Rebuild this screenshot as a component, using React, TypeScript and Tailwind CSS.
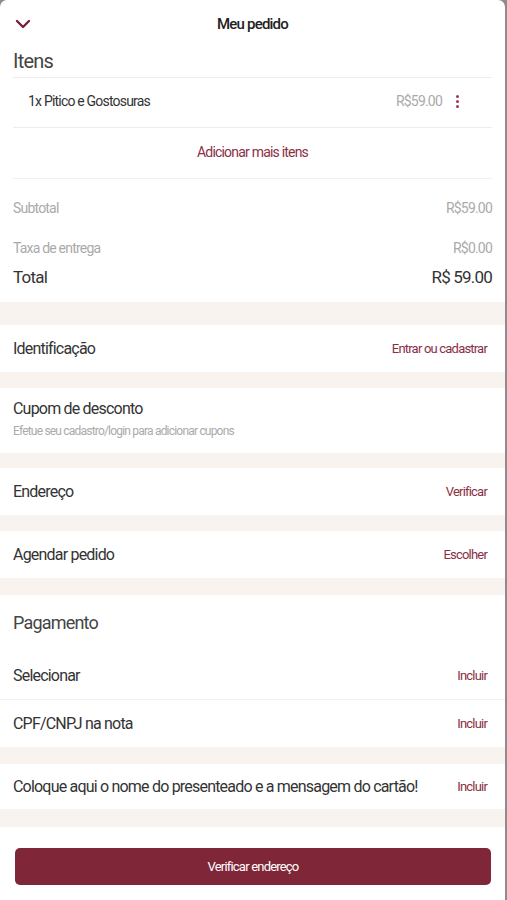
import React from "react";

const maroon = "text-[#8a2f45]";

function Band({ h }: { h: string }) {
  return <div className={`${h} bg-[#f8f3ee]`} />;
}

function Row({ label, action, h = "h-[47px]" }: { label: string; action: string; h?: string }) {
  return (
    <div className={`flex items-center justify-between px-[13px] ${h}`}>
      <span className="text-[16px] text-[#333]">{label}</span>
      <span className={`text-[13px] ${maroon} pr-[5px]`}>{action}</span>
    </div>
  );
}

export default function App() {
  return (
    <div
      className="w-[507px] h-[900px] bg-[#8c8c8c] overflow-hidden"
      style={{ fontFamily: "Roboto, 'Noto Sans', sans-serif" }}
    >
      <div className="w-[505px] h-[900px] bg-white rounded-t-[7px] flex flex-col tracking-[-0.05em]">
        {/* Header */}
        <div className="relative h-[46px] flex items-center justify-center">
          <svg className="absolute left-[15px] top-[19px]" width="16" height="10" viewBox="0 0 16 10">
            <path d="M2 2 L8 8 L14 2" fill="none" stroke="#7a1f38" strokeWidth="2.4" strokeLinecap="round" strokeLinejoin="round" />
          </svg>
          <span className="text-[15px] font-medium text-[#222] mt-[2px]">Meu pedido</span>
        </div>
        <div className="px-[13px] h-[31px] flex items-center pb-[2px]">
          <span className="text-[20px] text-[#444]">Itens</span>
        </div>
        <div className="mx-[13px] border-t border-[#ededed]" />
        <div className="mx-[13px] h-[49px] flex items-center justify-between pl-[15px] pr-[33px] pb-[2px]">
          <span className="text-[14px] text-[#333]">1x Pitico e Gostosuras</span>
          <div className="flex items-center gap-[14px]">
            <span className="text-[14px] text-[#aaa]">R$59.00</span>
            <div className="flex flex-col gap-[2px] w-[3px]">
              <div className="w-[3px] h-[3px] rounded-full bg-[#a83055]" />
              <div className="w-[3px] h-[3px] rounded-full bg-[#a83055]" />
              <div className="w-[3px] h-[3px] rounded-full bg-[#a83055]" />
            </div>
          </div>
        </div>
        <div className="mx-[13px] border-t border-[#ededed]" />
        <div className="h-[50px] flex items-center justify-center pb-[2px]">
          <span className={`text-[14px] ${maroon}`}>Adicionar mais itens</span>
        </div>
        <div className="mx-[13px] border-t border-[#f0f0f0]" />
        <div className="px-[13px] pt-[19px] flex justify-between text-[14px] text-[#aaa]">
          <span>Subtotal</span>
          <span>R$59.00</span>
        </div>
        <div className="px-[13px] pt-[19px] flex justify-between text-[14px] text-[#aaa]">
          <span>Taxa de entrega</span>
          <span>R$0.00</span>
        </div>
        <div className="px-[13px] pt-[6px] h-[35px] flex justify-between text-[17px] text-[#333]">
          <span>Total</span>
          <span>R$ 59.00</span>
        </div>
        <Band h="h-[23px] mt-[8px]" />
        <Row label="Identificação" action="Entrar ou cadastrar" />
        <Band h="h-[16px]" />
        <div className="px-[13px] h-[65px] flex flex-col justify-center pb-[4px]">
          <span className="text-[16px] text-[#333] leading-[22px]">Cupom de desconto</span>
          <span className="text-[12px] text-[#aaa] leading-[18px] mt-[2px]">Efetue seu cadastro/login para adicionar cupons</span>
        </div>
        <Band h="h-[15px]" />
        <Row label="Endereço" action="Verificar" />
        <Band h="h-[16px]" />
        <Row label="Agendar pedido" action="Escolher" />
        <Band h="h-[17px]" />
        <div className="px-[13px] h-[57px] flex items-center pb-[3px]">
          <span className="text-[18px] text-[#444]">Pagamento</span>
        </div>
        <Row label="Selecionar" action="Incluir" h="h-[47px]" />
        <div className="border-t border-[#f2f2f2]" />
        <Row label="CPF/CNPJ na nota" action="Incluir" h="h-[47px]" />
        <Band h="h-[17px]" />
        <Row label="Coloque aqui o nome do presenteado e a mensagem do cartão!" action="Incluir" h="h-[45px]" />
        <Band h="h-[18px]" />
        <div className="px-[15px] pt-[21px]">
          <button className="w-[476px] h-[37px] rounded-[5px] bg-[#7f2639] text-white text-[13px]">
            Verificar endereço
          </button>
        </div>
      </div>
    </div>
  );
}
